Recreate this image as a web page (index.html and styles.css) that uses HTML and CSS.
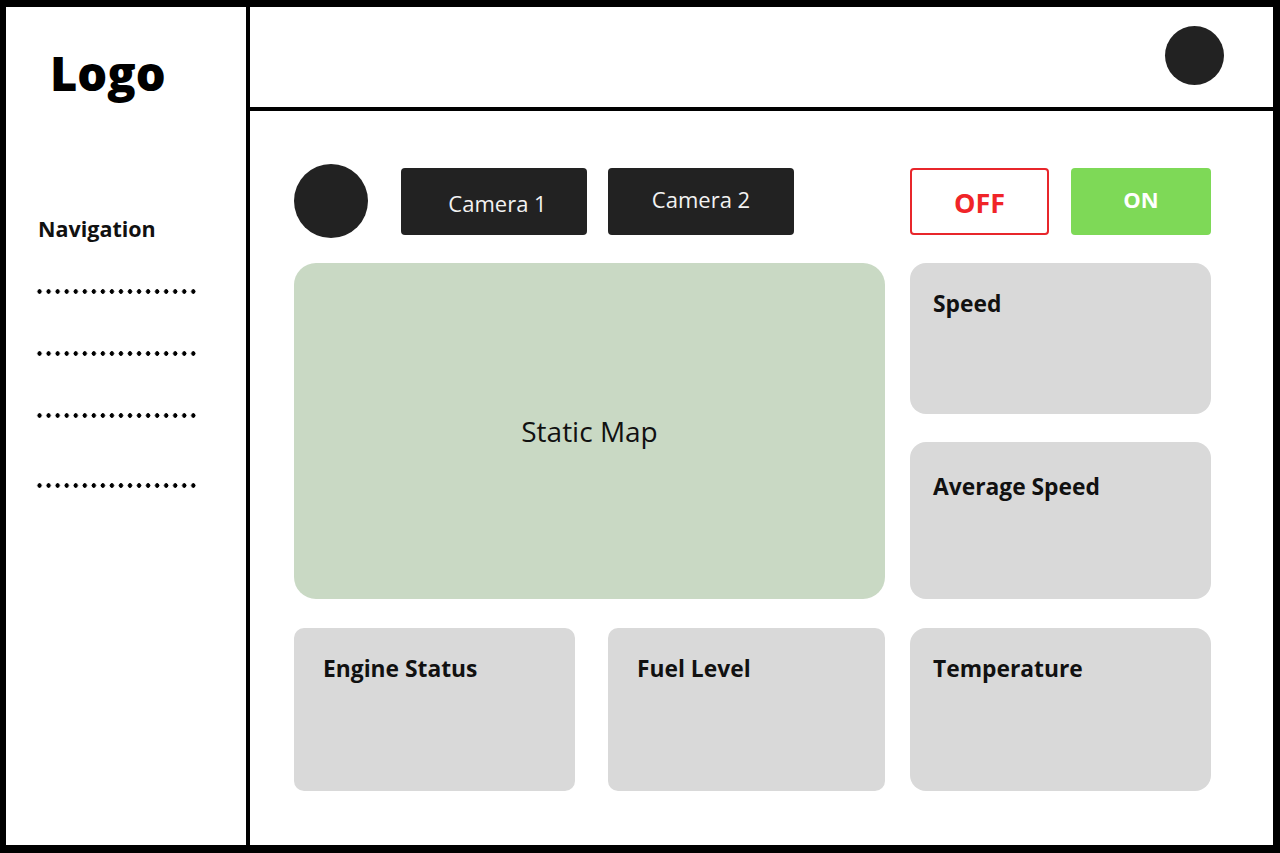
FILE: index.html
```html
<!DOCTYPE html>
<html lang="en">
<head>
<meta charset="utf-8">
<title>Dashboard wireframe</title>
<link rel="stylesheet" href="styles.css">
</head>
<body>
<div class="frame">
  <aside class="sidebar">
    <div class="logo">Logo</div>
    <div class="nav-title">Navigation</div>
    <div class="nav-dots nav-dots--first"></div>
    <div class="nav-dots"></div>
    <div class="nav-dots"></div>
    <div class="nav-dots nav-dots--last"></div>
  </aside>
  <main class="main">
    <header class="header">
      <div class="avatar"></div>
    </header>
    <section class="content">
      <div class="toolbar">
        <div class="dot-btn"></div>
        <button class="cam-btn cam-btn--first"><span class="cam-label cam-label--low">Camera 1</span></button>
        <button class="cam-btn cam-btn--second"><span class="cam-label cam-label--high">Camera 2</span></button>
        <div class="toggles">
          <button class="toggle toggle--off">OFF</button>
          <button class="toggle toggle--on">ON</button>
        </div>
      </div>
      <div class="grid">
        <div class="map">Static Map</div>
        <div class="card card--speed"><span class="card-title">Speed</span></div>
        <div class="card card--avg"><span class="card-title">Average Speed</span></div>
        <div class="card card--engine"><span class="card-title">Engine Status</span></div>
        <div class="card card--fuel"><span class="card-title">Fuel Level</span></div>
        <div class="card card--temp"><span class="card-title">Temperature</span></div>
      </div>
    </section>
  </main>
</div>
</body>
</html>
```
FILE: styles.css
```css
* { box-sizing: border-box; }

html, body {
  margin: 0;
  padding: 0;
  background: #000;
}

body {
  font-family: "Open Sans", "Noto Sans", "Liberation Sans", sans-serif;
  color: #111;
}

.frame {
  width: 1280px;
  height: 853px;
  background: #fff;
  border-style: solid;
  border-color: #000;
  border-width: 7px 7px 8px 6px;
  display: flex;
}

/* Sidebar */
.sidebar {
  width: 244px;
  flex: none;
  border-right: 4px solid #000;
  padding: 32px 0 0 32px;
  display: flex;
  flex-direction: column;
  align-items: flex-start;
}

.logo {
  font-size: 47px;
  font-weight: 800;
  line-height: 65px;
  margin-left: 12px;
  margin-top: 2px;
  color: #000;
}

.nav-title {
  margin-top: 109px;
  font-size: 21.5px;
  font-weight: 700;
  line-height: 28px;
  color: #111;
}

.nav-dots {
  width: 163px;
  height: 5px;
  margin-top: 57px;
  margin-left: -3px;
  background-image: radial-gradient(circle, #000 2px, rgba(0,0,0,0) 2.5px);
  background-size: 9.06px 5px;
  background-position: 0 0;
  background-repeat: repeat-x;
}

.nav-dots--first { margin-top: 46px; }
.nav-dots--last { margin-top: 65px; }

/* Main */
.main {
  flex: 1;
  display: flex;
  flex-direction: column;
  min-width: 0;
}

.header {
  height: 104px;
  flex: none;
  border-bottom: 4px solid #000;
  display: flex;
  align-items: center;
  justify-content: flex-end;
  padding-right: 49px;
}

.avatar {
  width: 59px;
  height: 59px;
  border-radius: 50%;
  background: #222;
  margin-bottom: 3px;
}

.content {
  padding: 53px 62px 0 44px;
  display: flex;
  flex-direction: column;
}

.toolbar {
  display: flex;
  align-items: center;
  height: 74px;
}

.dot-btn {
  width: 74px;
  height: 74px;
  border-radius: 50%;
  background: #222;
  flex: none;
}

.cam-btn {
  width: 186px;
  height: 67px;
  border: none;
  border-radius: 4px;
  background: #222;
  color: #f2f2f2;
  font-family: inherit;
  font-size: 22px;
  font-weight: 400;
  padding: 0;
  display: flex;
  align-items: center;
  justify-content: center;
  margin-top: 1px;
}

.cam-btn--first { margin-left: 33px; }
.cam-btn--second { margin-left: 21px; }

.cam-label--low { padding-top: 2px; padding-left: 7px; }
.cam-label--high { padding-bottom: 6px; }

.toggles {
  margin-left: auto;
  display: flex;
  gap: 22px;
  margin-top: 1px;
}

.toggle {
  height: 67px;
  border-radius: 4px;
  font-family: inherit;
  font-weight: 700;
  padding: 0;
  display: flex;
  align-items: center;
  justify-content: center;
}

.toggle--off {
  width: 139px;
  background: #fff;
  border: 2px solid #e8262b;
  color: #f02428;
  font-size: 27px;
  padding-top: 1px;
}

.toggle--on {
  width: 140px;
  background: #7ed957;
  border: none;
  color: #fff;
  font-size: 22px;
  padding-bottom: 6px;
}

/* Grid */
.grid {
  margin-top: 25px;
  display: grid;
  grid-template-columns: 281px 33px 277px 25px 301px;
  grid-template-rows: 151px 28px 157px 29px 163px;
}

.map {
  grid-column: 1 / 4;
  grid-row: 1 / 4;
  background: #c9d9c4;
  border-radius: 22px;
  display: flex;
  align-items: center;
  justify-content: center;
  font-size: 28px;
  font-weight: 400;
  color: #111;
}

.card {
  background: #d9d9d9;
  border-radius: 16px;
  padding: 26px 23px 0;
}

.card-title {
  font-size: 22.8px;
  font-weight: 700;
  line-height: 30px;
  color: #111;
}

.card--speed { grid-column: 5; grid-row: 1; }
.card--avg { grid-column: 5; grid-row: 3; padding-top: 30px; }
.card--engine { grid-column: 1; grid-row: 5; padding-left: 29px; border-radius: 10px; }
.card--fuel { grid-column: 3; grid-row: 5; padding-left: 29px; border-radius: 10px; }
.card--temp { grid-column: 5; grid-row: 5; }
```
